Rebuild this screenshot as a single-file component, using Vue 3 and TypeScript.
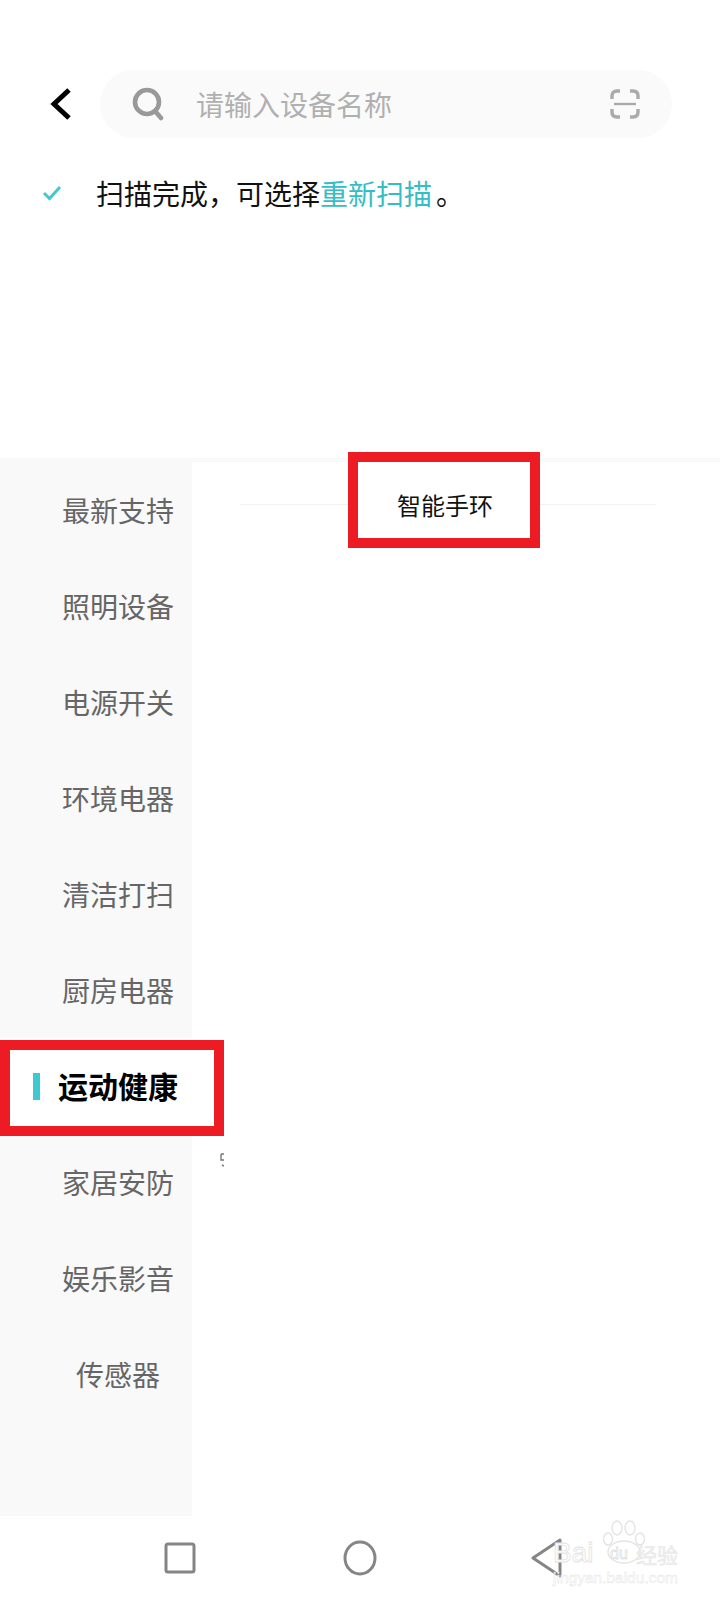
<template>
  <div class="page">
    <div class="top">
      <div class="search-row">
        <svg class="back" width="24" height="32" viewBox="0 0 24 32">
          <path d="M20 2 L5 16 L20 30" fill="none" stroke="#000" stroke-width="5" />
        </svg>
        <div class="search">
          <svg class="search__icon" width="32" height="34" viewBox="0 0 32 34">
            <circle cx="15" cy="15" r="12" fill="none" stroke="#999" stroke-width="4.6" />
            <path d="M23 24 L29 31" fill="none" stroke="#999" stroke-width="4.6" stroke-linecap="round" />
          </svg>
          <span class="search__placeholder">请输入设备名称</span>
          <svg class="search__scan" width="30" height="30" viewBox="0 0 30 30">
            <path
              d="M2 10 V7 Q2 2 7 2 H10 M20 2 H23 Q28 2 28 7 V10 M2 20 V23 Q2 28 7 28 H10 M20 28 H23 Q28 28 28 23 V20"
              fill="none"
              stroke="#aaa"
              stroke-width="3.4"
            />
            <path d="M4 15 H26" stroke="#aaa" stroke-width="2.4" />
          </svg>
        </div>
      </div>
      <div class="status">
        <svg class="status__check" width="20" height="16" viewBox="0 0 20 16">
          <path d="M2 8 L7.5 13.5 L18 2" fill="none" stroke="#45c8ce" stroke-width="3" />
        </svg>
        <span>扫描完成，可选择<span class="status__link">重新扫描</span>。</span>
      </div>
    </div>

    <div class="body">
      <ul class="side">
        <li
          v-for="item in categories"
          :key="item"
          :class="['side__item', { 'side__item--active': item === active }]"
        >
          <i v-if="item === active" class="side__bar"></i>
          {{ item }}
        </li>
      </ul>
      <div class="panel">
        <div class="panel__head">
          <span class="panel__line panel__line--left"></span>
          <span class="panel__label">智能手环</span>
          <span class="panel__line"></span>
        </div>
      </div>
    </div>

    <div class="nav">
      <svg width="32" height="32" viewBox="0 0 32 32">
        <rect x="2" y="2" width="28" height="28" rx="2" fill="none" stroke="#858585" stroke-width="3" />
      </svg>
      <svg class="nav__home" width="36" height="36" viewBox="0 0 36 36">
        <ellipse cx="18" cy="18" rx="15" ry="16" fill="none" stroke="#858585" stroke-width="3" />
      </svg>
      <svg class="nav__back" width="32" height="40" viewBox="0 0 32 40">
        <path d="M29 2 L2 20 L29 38 Z" fill="none" stroke="#858585" stroke-width="3" stroke-linejoin="round" />
      </svg>
    </div>

    <!-- red annotation boxes + watermark sit on top of the screenshot -->
    <div class="mark mark--label"></div>
    <div class="mark mark--side"></div>
    <svg class="stray" width="4" height="14" viewBox="0 0 4 14">
      <path d="M1 1 H4 M1 1 V7 H4 M2 12 L4 13" fill="none" stroke="#777" stroke-width="1.4" />
    </svg>
    <div class="wm">
      <span class="wm__bai">Bai</span>
      <svg class="wm__paw" width="46" height="46" viewBox="0 0 46 46">
        <g fill="#fff" stroke="#e4e4e4" stroke-width="1.4">
          <ellipse cx="7" cy="19" rx="4.5" ry="6" />
          <ellipse cx="16" cy="8" rx="5" ry="7" />
          <ellipse cx="29" cy="8" rx="5" ry="7" />
          <ellipse cx="39" cy="19" rx="4.5" ry="6" />
          <ellipse cx="23" cy="32" rx="16" ry="11" />
        </g>
      </svg>
      <span class="wm__du">du</span>
      <span class="wm__cn">经验</span>
      <span class="wm__url">jingyan.baidu.com</span>
    </div>
  </div>
</template>

<script setup lang="ts">
const categories: string[] = [
  '最新支持',
  '照明设备',
  '电源开关',
  '环境电器',
  '清洁打扫',
  '厨房电器',
  '运动健康',
  '家居安防',
  '娱乐影音',
  '传感器',
]

const active = '运动健康'
</script>

<style>
html,
body {
  margin: 0;
  background: #fff;
}
</style>

<style scoped>
.page {
  position: relative;
  width: 720px;
  height: 1600px;
  display: flex;
  flex-direction: column;
  overflow: hidden;
  background: #fff;
  font-family: "Noto Sans CJK SC", "Noto Sans", sans-serif;
}

.top {
  height: 458px;
  padding-top: 70px;
  box-sizing: border-box;
}

.search-row {
  display: flex;
  align-items: center;
  padding-left: 49px;
}

.back {
  flex: none;
}

.search {
  width: 572px;
  height: 68px;
  margin-left: 27px;
  padding: 0 32px 0 32px;
  box-sizing: border-box;
  display: flex;
  align-items: center;
  border-radius: 34px;
  background: #fafafa;
}

.search__icon {
  flex: none;
}

.search__placeholder {
  margin-left: 32px;
  font-size: 28px;
  line-height: 68px;
  color: #b0b0b0;
}

.search__scan {
  margin-left: auto;
}

.status {
  display: flex;
  align-items: center;
  margin-top: 37px;
  padding-left: 42px;
  font-size: 28px;
  line-height: 36px;
  color: #111;
}

.status__check {
  margin-right: 34px;
}

.status__link {
  margin-right: 4px;
  color: #35bdc4;
}

.body {
  flex: 1;
  display: flex;
  min-height: 0;
}

.side {
  width: 192px;
  margin: 0;
  padding: 4px 0 0;
  box-sizing: border-box;
  list-style: none;
  background: #f9f9f9;
}

.side__item {
  position: relative;
  height: 96px;
  padding-left: 44px;
  box-sizing: border-box;
  display: flex;
  align-items: center;
  justify-content: center;
  font-size: 28px;
  color: #666;
}

.side__item--active {
  padding-bottom: 2px;
  font-size: 30px;
  font-weight: 700;
  color: #000;
  background: #fff;
}

.side__bar {
  position: absolute;
  left: 33px;
  top: 35px;
  width: 7px;
  height: 27px;
  background: #3ec9d0;
}

.panel {
  flex: 1;
  border-top: 4px solid #f9f9f9;
}

.panel__head {
  display: flex;
  align-items: center;
  height: 84px;
  padding: 0 64px 0 48px;
}

.panel__line {
  flex: 1;
  height: 1px;
  background: #f2f2f2;
}

.panel__line--left {
  flex: 0 0 118px;
}

.panel__label {
  width: 172px;
  padding-left: 39px;
  box-sizing: border-box;
  font-size: 24px;
  color: #111;
}

.nav {
  height: 84px;
  flex: none;
  display: flex;
  align-items: center;
  padding-left: 164px;
  box-sizing: border-box;
}

.nav__home {
  margin-left: 146px;
}

.nav__back {
  margin-left: 153px;
}

.mark {
  position: absolute;
  box-sizing: border-box;
  border: 10px solid #ed1c24;
}

.mark--label {
  left: 348px;
  top: 452px;
  width: 192px;
  height: 96px;
}

.mark--side {
  left: 0;
  top: 1040px;
  width: 224px;
  height: 96px;
}

.stray {
  position: absolute;
  left: 220px;
  top: 1153px;
}

.wm {
  position: absolute;
  left: 553px;
  top: 1520px;
  width: 130px;
  height: 64px;
  font-family: "Liberation Sans", sans-serif;
  color: #fff;
  -webkit-text-stroke: 0.8px #e2e2e2;
}

.wm__bai,
.wm__paw,
.wm__du,
.wm__cn,
.wm__url {
  position: absolute;
}

.wm__bai {
  left: 0;
  top: 19px;
  font-size: 28px;
  line-height: 28px;
}

.wm__paw {
  left: 48px;
  top: 0;
}

.wm__du {
  left: 57px;
  top: 25px;
  font-size: 16px;
  line-height: 18px;
}

.wm__cn {
  left: 83px;
  top: 22px;
  font-size: 21px;
  line-height: 24px;
  font-family: "Noto Sans CJK SC", sans-serif;
  -webkit-text-stroke: 0.5px #e2e2e2;
  color: #f4f4f4;
}

.wm__url {
  left: 0;
  top: 49px;
  font-size: 15.5px;
  line-height: 18px;
  white-space: nowrap;
  -webkit-text-stroke: 0.4px #e2e2e2;
}
</style>
